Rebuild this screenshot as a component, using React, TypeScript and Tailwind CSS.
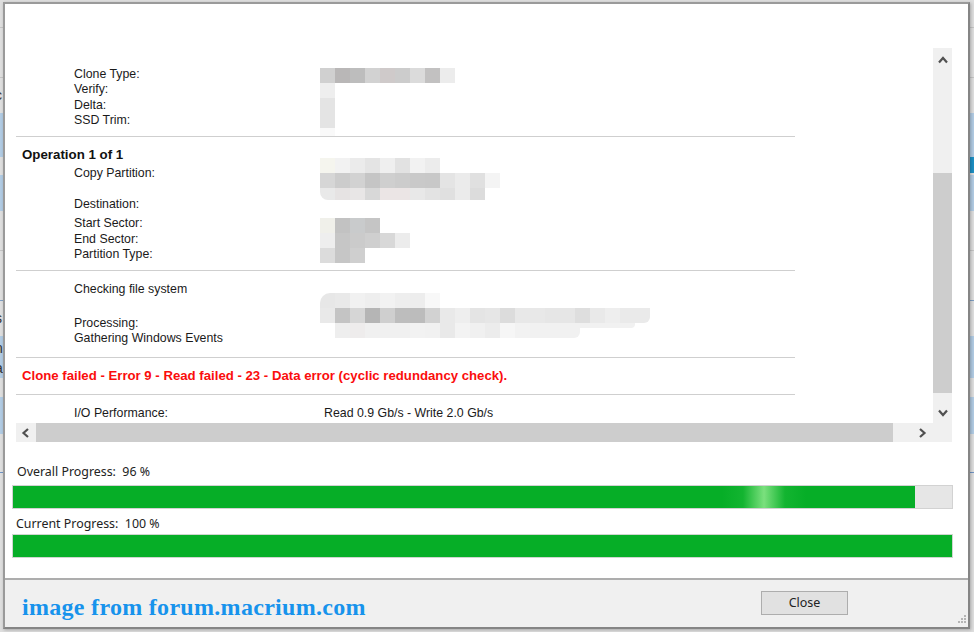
import React from "react";

const F = "font-['Liberation_Sans',Arial,sans-serif]";

function Cells({ cells, className = "" }: { cells: string[]; className?: string }) {
  return (
    <div className={"flex " + className}>
      {cells.map((c, i) => (
        <div key={i} className={"w-[15px] h-full shrink-0 " + c} />
      ))}
    </div>
  );
}

function Row({ label, value }: { label: string; value?: string }) {
  return (
    <div className="grid grid-cols-[250px_1fr] ml-[58px] h-[15.5px] items-center text-[12.35px] leading-[15.5px] text-[#1a1a1a] whitespace-nowrap">
      <span>{label}</span>
      {value ? <span>{value}</span> : null}
    </div>
  );
}

function Rule({ className = "" }: { className?: string }) {
  return <div className={"w-[779px] h-px bg-[#cfcfcf] " + className} />;
}

function Chevron({ d, className = "" }: { d: string; className?: string }) {
  return (
    <svg width="12" height="12" viewBox="0 0 12 12" className={className} fill="none">
      <path d={d} stroke="#505050" strokeWidth="2.2" />
    </svg>
  );
}

function Backdrop() {
  const gray = "bg-[#dedede]";
  const blue = "bg-[#b1cbe3]";
  return (
    <div className={"flex flex-col h-[632px] overflow-hidden text-[14px] leading-none text-[#333] " + F}>
      <div className={"h-[27px] " + gray} />
      <div className="h-px bg-[#c4c4c4]" />
      <div className={"h-[49px] " + gray} />
      <div className="h-px bg-[#c4c4c4]" />
      <div className={"h-[35px] relative " + gray}>
        <span className="absolute left-[-5px] top-[10px]">c</span>
      </div>
      <div className={"h-[44px] " + blue} />
      <div className={"h-[18px] flex justify-end " + gray}>
        <div className="w-[4px] h-[16px] bg-[#1c8fc4]" />
      </div>
      <div className={"h-[36px] " + blue} />
      <div className={"h-[39px] " + gray} />
      <div className="h-px bg-[#c4c4c4]" />
      <div className={"h-[49px] " + gray} />
      <div className="h-px bg-[#7f9fc4]" />
      <div className={"h-[35px] relative " + gray}>
        <span className="absolute left-[-5px] top-[10px]">s</span>
      </div>
      <div className={"h-[42px] relative " + blue}>
        <span className="absolute left-[-5px] top-[5px]">n</span>
        <span className="absolute left-[-5px] top-[25px]">a</span>
      </div>
      <div className={"h-[19px] " + gray} />
      <div className={"h-[37px] " + blue} />
      <div className={"h-[38px] " + gray} />
      <div className="h-px bg-[#6f93c4]" />
      <div className={"flex-1 " + gray} />
    </div>
  );
}

export default function App() {
  return (
    <div className={"relative w-[974px] h-[632px] overflow-hidden " + F}>
      <Backdrop />
      <div className="absolute left-[3px] top-[2px] w-[967px] h-[627px] flex flex-col bg-white border-2 border-[#9a9a9a] border-r-[#858585] border-b-[#858585] shadow-[1px_1px_3px_rgba(0,0,0,0.25)]">
        <div className="flex-1 flex flex-col pt-[44px] pl-[11px]">
          <div className="w-[936px] h-[394px] grid grid-cols-[917px_19px] grid-rows-[375px_19px] bg-[#f0f0f0]">
            <div className="relative bg-white overflow-hidden pt-[18.5px]">
              <Row label="Clone Type:" />
              <Row label="Verify:" />
              <Row label="Delta:" />
              <Row label="SSD Trim:" />
              <Rule className="mt-[7.5px]" />
              <div className="mt-[10px] ml-[6px] h-[16px] leading-[16px] text-[13.3px] font-bold text-[#111]">Operation 1 of 1</div>
              <div className="mt-[2.5px]"><Row label="Copy Partition:" /></div>
              <div className="mt-[15.5px]"><Row label="Destination:" /></div>
              <div className="mt-[4px]">
                <Row label="Start Sector:" />
                <Row label="End Sector:" />
                <Row label="Partition Type:" />
              </div>
              <Rule className="mt-[7.5px]" />
              <div className="mt-[10.5px]"><Row label="Checking file system" /></div>
              <div className="mt-[18.5px]">
                <Row label="Processing:" />
                <Row label="Gathering Windows Events" />
              </div>
              <Rule className="mt-[10.5px]" />
              <div className="mt-[10px] ml-[6px] h-[16px] leading-[16px] text-[13.2px] font-bold text-[#fb0d0d] whitespace-nowrap">
                Clone failed - Error 9 - Read failed - 23 - Data error (cyclic redundancy check).
              </div>
              <Rule className="mt-[10px]" />
              <div className="mt-[11px]"><Row label="I/O Performance:" value="Read 0.9 Gb/s - Write 2.0 Gb/s" /></div>

              {/* blurred redactions laid over the values */}
              <div className="absolute left-[304px] top-[20px] flex flex-col">
                <Cells className="h-[15px]" cells={["bg-[#d0d0d0]", "bg-[#b9b7b7]", "bg-[#bdbdbd]", "bg-[#d2d2d2]", "bg-[#cfcaca]", "bg-[#cccccc]", "bg-[#dbdbdb]", "bg-[#c2c1c1]", "bg-[#ececec]"]} />
                <Cells className="h-[15px]" cells={["bg-[#eeeeee]"]} />
                <Cells className="h-[30px]" cells={["bg-[#e4e4e4]"]} />
                <Cells className="h-[8px]" cells={["bg-[#f9f9f9]"]} />
              </div>
              <div className="absolute left-[304px] top-[110px] flex flex-col">
                <Cells className="h-[15px]" cells={["bg-[#f5f5ee]", "bg-[#f2f2f2]", "bg-[#ebebeb]", "bg-[#e4e4e4]", "bg-[#efefef]", "bg-[#e2e2e2]", "bg-[#f2f2f2]", "bg-[#ececec]"]} />
                <Cells className="h-[15px]" cells={["bg-[#d6d6d6]", "bg-[#cccccc]", "bg-[#d2d2d2]", "bg-[#c5c5c5]", "bg-[#cfcfcf]", "bg-[#cccccc]", "bg-[#c9c9c9]", "bg-[#c8c8c8]", "bg-[#e4e4e4]", "bg-[#ebebeb]", "bg-[#e0e0e0]", "bg-[#f4f4f4]"]} />
                <Cells className="h-[12px] rounded-bl-[8px] overflow-hidden" cells={["bg-[#e9e9e9]", "bg-[#e6e3e3]", "bg-[#e8e6e6]", "bg-[#d8d8d8]", "bg-[#ebe5e5]", "bg-[#ebe5e5]", "bg-[#e8e8e8]", "bg-[#e3e3e3]", "bg-[#e0e0e0]", "bg-[#ebebeb]", "bg-[#dcdcdc]"]} />
              </div>
              <div className="absolute left-[304px] top-[170px] flex flex-col">
                <Cells className="h-[15px]" cells={["bg-[#f0f0ea]", "bg-[#c2c2c2]", "bg-[#c9cbcc]", "bg-[#c5c5c5]"]} />
                <Cells className="h-[15px]" cells={["bg-[#eeeeee]", "bg-[#c6c6c6]", "bg-[#cbcbcb]", "bg-[#cfcfcf]", "bg-[#d8d8d8]", "bg-[#ececec]"]} />
                <Cells className="h-[15px]" cells={["bg-[#dcdcdc]", "bg-[#c6c6c6]", "bg-[#cfcfcf]"]} />
              </div>
              <div className="absolute left-[304px] top-[245px] flex flex-col">
                <Cells className="h-[15px] rounded-tl-[10px] overflow-hidden w-[120px]" cells={["bg-[#e7e7e7]", "bg-[#e9e9e9]", "bg-[#f1f1f1]", "bg-[#eeeeee]", "bg-[#f2f2f2]", "bg-[#eeeeee]", "bg-[#ededed]", "bg-[#f8f8f8]"]} />
                <Cells className="h-[15px] w-[330px] rounded-br-[6px] overflow-hidden" cells={["bg-[#e9e9e9]", "bg-[#c4c4c4]", "bg-[#d6d6d6]", "bg-[#b5b5b5]", "bg-[#cfcfcf]", "bg-[#bdbdbd]", "bg-[#bcbcbc]", "bg-[#d2d2d2]", "bg-[#e9e9e9]", "bg-[#eeeeee]", "bg-[#e4e4e4]", "bg-[#e6e6e6]", "bg-[#dcdcdc]", "bg-[#e8e8e8]", "bg-[#e8e8e8]", "bg-[#e6e6e6]", "bg-[#e6e6e6]", "bg-[#dedede]", "bg-[#e9e9e9]", "bg-[#eeeeee]", "bg-[#eaeaea]", "bg-[#eaeaea]"]} />
                <div className="flex items-start">
                  <Cells className="h-[15px] w-[260px] rounded-b-[6px] overflow-hidden" cells={["bg-[#ffffff]", "bg-[#eeeeee]", "bg-[#eeecec]", "bg-[#f0f0f0]", "bg-[#f0f0f0]", "bg-[#f0f0f0]", "bg-[#f2f2f2]", "bg-[#f1f1f1]", "bg-[#e9e9e9]", "bg-[#f3f3f3]", "bg-[#f0f0f0]", "bg-[#ececec]", "bg-[#f6f6f6]", "bg-[#f2f2f2]", "bg-[#f1f1f1]", "bg-[#f1f1f1]", "bg-[#f1f1f1]", "bg-[#f1f1f1]"]} />
                  <div className="w-[55px] h-[5px] bg-[#f1f1f1] rounded-br-[4px]" />
                </div>
              </div>
            </div>

            {/* vertical scrollbar */}
            <div className="flex flex-col items-center">
              <div className="h-[125px] w-full pt-[6px] flex justify-center">
                <Chevron d="M2 8.5 L6 4 L10 8.5" />
              </div>
              <div className="w-[19px] h-[220px] bg-[#cdcdcd]" />
              <div className="flex-1 flex items-start justify-center pt-[14px]">
                <Chevron d="M2 3.5 L6 8 L10 3.5" />
              </div>
            </div>

            {/* horizontal scrollbar */}
            <div className="flex items-center">
              <div className="w-[20px] h-full flex items-center justify-center">
                <Chevron d="M8 2 L3.5 6 L8 10" />
              </div>
              <div className="w-[857px] h-[19px] bg-[#cdcdcd]" />
              <div className="flex-1 flex items-center justify-end pr-[5px]">
                <Chevron d="M4 2 L8.5 6 L4 10" />
              </div>
            </div>
            <div />
          </div>

          <div className="mt-[21px] ml-[1px] h-[17px] leading-[17px] text-[12.4px] text-[#222] whitespace-pre font-['Noto_Sans',sans-serif]">Overall Progress:  96 %</div>
          <div className="relative mt-[5px] ml-[-4px] w-[941px] h-[24px] bg-[#e6e6e6] border border-[#d2d2d2]">
            <div className="h-full w-[902px] bg-[#06ae27]" />
            <div className="absolute left-[709px] top-0 w-[84px] h-full bg-[linear-gradient(90deg,rgba(130,230,130,0)_0%,rgba(110,225,115,0.12)_25%,#7be07e_50%,rgba(110,225,115,0.12)_75%,rgba(130,230,130,0)_100%)]" />
          </div>
          <div className="mt-[6px] h-[17px] leading-[17px] text-[12.4px] text-[#222] whitespace-pre font-['Noto_Sans',sans-serif]">Current Progress:  100 %</div>
          <div className="mt-[2px] ml-[-4px] w-[941px] h-[24px] bg-[#06ae27] border border-[#cfd6cf]" />
        </div>

        <div className="relative h-[49px] shrink-0 bg-[#f0f0f0] border-t-2 border-[#adadad] flex items-center pl-[17px]">
          <span className="text-[24px] leading-none font-bold tracking-[0.3px] text-[#1793ec] whitespace-nowrap font-['Liberation_Serif',serif] mt-[7px]">image from forum.macrium.com</span>
          <button className="absolute left-[756px] top-[11px] w-[87px] h-[24px] bg-[#e1e1e1] border border-[#adadad] text-[12.5px] text-[#222] font-['Noto_Sans',sans-serif]">Close</button>
          <svg width="12" height="12" viewBox="0 0 12 12" className="absolute right-[1px] bottom-[1px]">
            <g fill="#b5b5b5">
              <rect x="9" y="1" width="2" height="2" />
              <rect x="6" y="4" width="2" height="2" />
              <rect x="9" y="4" width="2" height="2" />
              <rect x="3" y="7" width="2" height="2" />
              <rect x="6" y="7" width="2" height="2" />
              <rect x="9" y="7" width="2" height="2" />
            </g>
          </svg>
        </div>
      </div>
    </div>
  );
}
